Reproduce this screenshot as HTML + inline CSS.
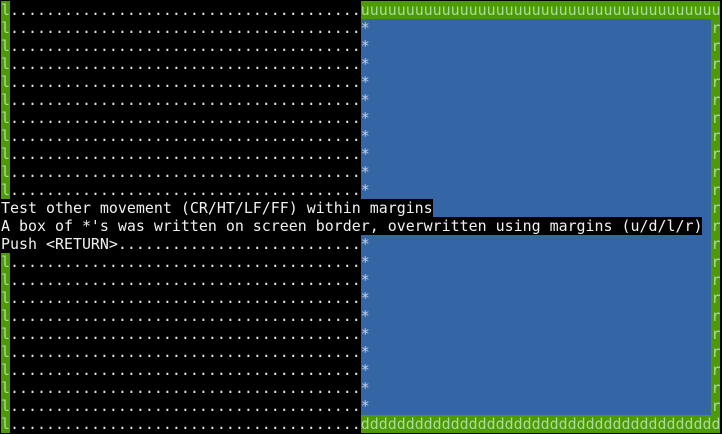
<!DOCTYPE html>
<html><head><meta charset="utf-8"><style>
html,body{margin:0;padding:0;background:#000;width:722px;height:434px;overflow:hidden}
.r{position:absolute;left:1px;height:18px;white-space:pre;font-family:"DejaVu Sans Mono","Liberation Mono",monospace;font-size:14.95px;line-height:18px;color:#e6e6e6}
.r span{display:inline-block;height:18px;vertical-align:top}
.g{background:#4e9a06;color:#a8dc9a}
.b{background:#3465a4;color:#c4cde0}
.k{background:#000;color:#f0f0f0}
</style></head><body>
<div class="r" style="top:1px"><span class="g">l</span>.......................................<span class="g">uuuuuuuuuuuuuuuuuuuuuuuuuuuuuuuuuuuuuuuu</span></div>
<div class="r" style="top:19px"><span class="g">l</span>.......................................<span class="b">*                                      </span><span class="g">r</span></div>
<div class="r" style="top:37px"><span class="g">l</span>.......................................<span class="b">*                                      </span><span class="g">r</span></div>
<div class="r" style="top:55px"><span class="g">l</span>.......................................<span class="b">*                                      </span><span class="g">r</span></div>
<div class="r" style="top:73px"><span class="g">l</span>.......................................<span class="b">*                                      </span><span class="g">r</span></div>
<div class="r" style="top:91px"><span class="g">l</span>.......................................<span class="b">*                                      </span><span class="g">r</span></div>
<div class="r" style="top:109px"><span class="g">l</span>.......................................<span class="b">*                                      </span><span class="g">r</span></div>
<div class="r" style="top:127px"><span class="g">l</span>.......................................<span class="b">*                                      </span><span class="g">r</span></div>
<div class="r" style="top:145px"><span class="g">l</span>.......................................<span class="b">*                                      </span><span class="g">r</span></div>
<div class="r" style="top:163px"><span class="g">l</span>.......................................<span class="b">*                                      </span><span class="g">r</span></div>
<div class="r" style="top:181px"><span class="g">l</span>.......................................<span class="b">*                                      </span><span class="g">r</span></div>
<div class="r" style="top:199px"><span class="k">Test other movement (CR/HT/LF/FF) within margins</span><span class="b">                               </span><span class="g">r</span></div>
<div class="r" style="top:217px"><span class="k">A box of *'s was written on screen border, overwritten using margins (u/d/l/r)</span><span class="b"> </span><span class="g">r</span></div>
<div class="r" style="top:235px"><span class="k">Push &lt;RETURN&gt;...........................</span><span class="b">*                                      </span><span class="g">r</span></div>
<div class="r" style="top:253px"><span class="g">l</span>.......................................<span class="b">*                                      </span><span class="g">r</span></div>
<div class="r" style="top:271px"><span class="g">l</span>.......................................<span class="b">*                                      </span><span class="g">r</span></div>
<div class="r" style="top:289px"><span class="g">l</span>.......................................<span class="b">*                                      </span><span class="g">r</span></div>
<div class="r" style="top:307px"><span class="g">l</span>.......................................<span class="b">*                                      </span><span class="g">r</span></div>
<div class="r" style="top:325px"><span class="g">l</span>.......................................<span class="b">*                                      </span><span class="g">r</span></div>
<div class="r" style="top:343px"><span class="g">l</span>.......................................<span class="b">*                                      </span><span class="g">r</span></div>
<div class="r" style="top:361px"><span class="g">l</span>.......................................<span class="b">*                                      </span><span class="g">r</span></div>
<div class="r" style="top:379px"><span class="g">l</span>.......................................<span class="b">*                                      </span><span class="g">r</span></div>
<div class="r" style="top:397px"><span class="g">l</span>.......................................<span class="b">*                                      </span><span class="g">r</span></div>
<div class="r" style="top:415px"><span class="g">l</span>.......................................<span class="g">dddddddddddddddddddddddddddddddddddddddd</span></div>
</body></html>
